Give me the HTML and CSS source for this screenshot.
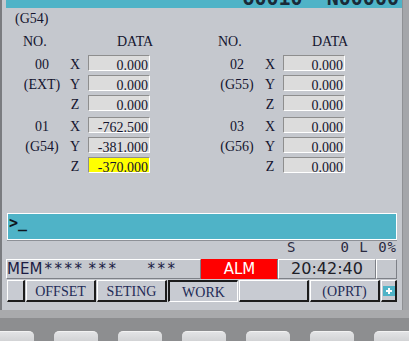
FILE: index.html
```html
<!DOCTYPE html>
<html lang="en">
<head>
    <meta charset="UTF-8">
    <meta name="viewport" content="width=device-width, initial-scale=1.0">
    <title>Work Offset</title>
    <link rel="stylesheet" href="styles.css">
</head>
<body>
    <div class="screen">
        <div class="edge-left"></div>
        <div class="display">
            <div class="title-bar"><span class="prog">O0010  N00000</span></div>

            <div class="panel">
                <div class="coord-sys">(G54)</div>

                <div class="offsets">
                    <div class="column">
                        <div class="col-head"><span class="no">NO.</span><span class="data">DATA</span></div>
                        <div class="group">
                            <div class="num">00</div><div class="axis">X</div><div class="value">0.000</div>
                            <div class="num">(EXT)</div><div class="axis">Y</div><div class="value">0.000</div>
                            <div class="num"></div><div class="axis">Z</div><div class="value">0.000</div>
                        </div>
                        <div class="group">
                            <div class="num">01</div><div class="axis">X</div><div class="value">-762.500</div>
                            <div class="num">(G54)</div><div class="axis">Y</div><div class="value">-381.000</div>
                            <div class="num"></div><div class="axis">Z</div><div class="value active">-370.000</div>
                        </div>
                    </div>

                    <div class="column">
                        <div class="col-head"><span class="no">NO.</span><span class="data">DATA</span></div>
                        <div class="group">
                            <div class="num">02</div><div class="axis">X</div><div class="value">0.000</div>
                            <div class="num">(G55)</div><div class="axis">Y</div><div class="value">0.000</div>
                            <div class="num"></div><div class="axis">Z</div><div class="value">0.000</div>
                        </div>
                        <div class="group">
                            <div class="num">03</div><div class="axis">X</div><div class="value">0.000</div>
                            <div class="num">(G56)</div><div class="axis">Y</div><div class="value">0.000</div>
                            <div class="num"></div><div class="axis">Z</div><div class="value">0.000</div>
                        </div>
                    </div>
                </div>

                <div class="cmd">&gt;_</div>

                <div class="status-line">
                    <span class="s">S</span>
                    <span class="counts">0 L 0%</span>
                </div>

                <div class="status-bar">
                    <div class="cell mode">MEM<span class="stars st1">****</span><span class="stars st2">***</span><span class="stars st3">***</span></div>
                    <div class="cell alarm">ALM</div>
                    <div class="cell clock">20:42:40</div>
                    <div class="cell spare"></div>
                </div>

                <div class="softkeys">
                    <div class="key k-small"></div>
                    <div class="key">OFFSET</div>
                    <div class="key">SETING</div>
                    <div class="key on">WORK</div>
                    <div class="key"></div>
                    <div class="key">(OPRT)</div>
                    <div class="key k-plus">
                        <svg width="12" height="10" viewBox="0 0 12 10">
                            <rect width="12" height="10" fill="#4fb3c7"/>
                            <rect x="5" y="2" width="2" height="6" fill="#fff"/>
                            <rect x="3" y="4" width="6" height="2" fill="#fff"/>
                        </svg>
                    </div>
                </div>
            </div>
        </div>
        <div class="edge-right"></div>
    </div>

    <div class="bezel">
        <div class="cap first"></div>
        <div class="cap"></div>
        <div class="cap"></div>
        <div class="cap"></div>
        <div class="cap"></div>
        <div class="cap"></div>
        <div class="cap"></div>
    </div>
</body>
</html>
```

FILE: styles.css
```css
* {
    box-sizing: border-box;
}

body {
    margin: 0;
    width: 409px;
    background: #8d8e90;
    font-family: "Liberation Serif", serif;
}

.screen {
    display: flex;
    height: 310px;
}

.edge-left {
    width: 2px;
    background: #7a7c80;
}

.edge-right {
    width: 7px;
    background: #a4a6aa;
    border-left: 1px solid #8f9195;
}

.display {
    width: 400px;
    background: #c5c8ce;
    display: flex;
    flex-direction: column;
}

.title-bar {
    height: 8px;
    margin-left: 4px;
    background: #4fb3c7;
    overflow: hidden;
}

.prog {
    display: block;
    margin-top: -12px;
    padding-right: 3px;
    text-align: right;
    font: bold 20px/20px "DejaVu Sans Mono", monospace;
    color: #1a2a38;
    white-space: pre;
}

.panel {
    flex: 1;
    padding: 0 5px;
    color: #14142e;
}

.coord-sys {
    margin-top: 3px;
    padding-left: 8px;
    font-size: 14px;
    line-height: 16px;
}

.offsets {
    display: flex;
}

.column {
    width: 198px;
    padding-left: 13px;
    font-size: 14px;
}

.col-head,
.group {
    display: grid;
    grid-template-columns: 44px 24px 62px;
}

.col-head {
    margin-top: 7px;
    line-height: 16px;
}

.col-head .no {
    padding-left: 3px;
}

.col-head .data {
    grid-column: 3;
    padding-left: 29px;
    white-space: nowrap;
}

.group {
    grid-auto-rows: 16px;
    row-gap: 4px;
    margin-top: 5px;
}

.group + .group {
    margin-top: 6px;
}

.num {
    text-align: center;
    line-height: 19px;
    white-space: nowrap;
}

.axis {
    text-align: center;
    padding-right: 2px;
    line-height: 19px;
}

.value {
    background: #dcdcdc;
    border: 1px solid;
    border-color: #8e8e8e #fff #fff #8e8e8e;
    padding-right: 1px;
    text-align: right;
    line-height: 19px;
}

.value.active {
    background: #ffff00;
}

.cmd {
    margin-top: 40px;
    height: 27px;
    padding-left: 1px;
    border: 1px solid #fff;
    background: #4fb3c7;
    box-shadow: 0 1px 0 #8d9096;
    font: bold 15px/19px "DejaVu Sans Mono", monospace;
    color: #0e1620;
}

.status-line {
    display: flex;
    height: 18px;
    font: 14px/14px "DejaVu Sans Mono", monospace;
    color: #2a2a40;
}

.status-line .s {
    margin-left: 280px;
}

.status-line .counts {
    margin-left: auto;
    letter-spacing: 1px;
}

.status-bar {
    display: flex;
    height: 20px;
    margin-top: 1px;
    font-family: "DejaVu Sans", sans-serif;
}

.cell {
    border: 1px solid;
    border-color: #fff #7d8087 #7d8087 #fff;
    line-height: 18px;
}

.mode {
    width: 195px;
    margin-left: -1px;
    font-size: 15px;
    color: #1c1c44;
    white-space: pre;
}

.stars {
    letter-spacing: 2.5px;
}

.st1 { margin-left: 2px; }
.st2 { margin-left: 4px; }
.st3 { margin-left: 29px; }

.alarm {
    width: 77px;
    background: #ff0000;
    border-color: #ff0000 #7d8087 #ff0000 #ff0000;
    color: #fff;
    text-align: center;
    font-size: 15px;
}

.clock {
    width: 98px;
    text-align: center;
    font-size: 16px;
    color: #202028;
}

.spare {
    width: 21px;
}

.softkeys {
    display: flex;
    gap: 1px;
    height: 22px;
    margin-top: 1px;
}

.key {
    width: 70px;
    height: 22px;
    background: #c8cbd2;
    border-style: solid;
    border-width: 1px 2px 2px 1px;
    border-color: #fff #1c1c1c #1c1c1c #fff;
    text-align: center;
    font-size: 14px;
    line-height: 21px;
    color: #1e2a56;
    white-space: nowrap;
}

.key.on {
    border-width: 2px 1px 1px 2px;
    border-color: #1c1c1c #fff #fff #1c1c1c;
}

.k-small {
    width: 18px;
}

.k-plus {
    width: 16px;
    display: flex;
    align-items: center;
    justify-content: center;
}

.bezel {
    display: flex;
    gap: 20px;
    height: 31px;
    padding-top: 13px;
    border-top: 8px solid #a9aaac;
    overflow: hidden;
}

.cap {
    flex: none;
    width: 44px;
    height: 14px;
    border-top: 1px solid #f2f2f2;
    border-radius: 5px 5px 0 0;
    background: linear-gradient(#e2e3e5, #cbccce);
}

.cap.first {
    margin-left: -10px;
}
```
